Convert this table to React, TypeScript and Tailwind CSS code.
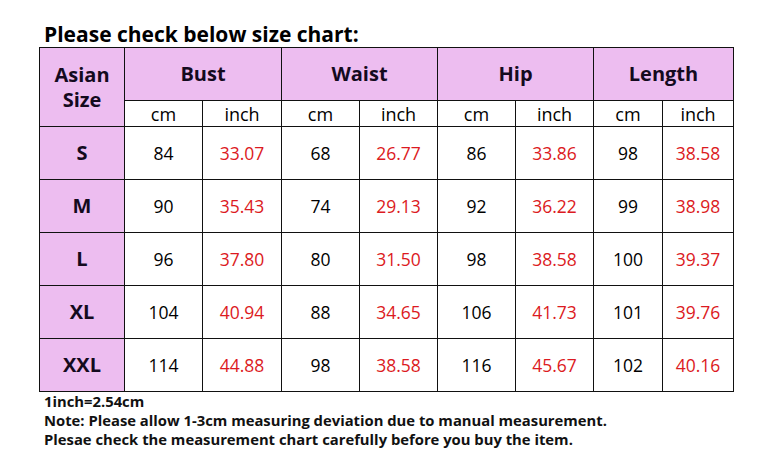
import React from "react";

type Row = { size: string; values: [string, string][] };

const rows: Row[] = [
  { size: "S", values: [["84", "33.07"], ["68", "26.77"], ["86", "33.86"], ["98", "38.58"]] },
  { size: "M", values: [["90", "35.43"], ["74", "29.13"], ["92", "36.22"], ["99", "38.98"]] },
  { size: "L", values: [["96", "37.80"], ["80", "31.50"], ["98", "38.58"], ["100", "39.37"]] },
  { size: "XL", values: [["104", "40.94"], ["88", "34.65"], ["106", "41.73"], ["101", "39.76"]] },
  { size: "XXL", values: [["114", "44.88"], ["98", "38.58"], ["116", "45.67"], ["102", "40.16"]] },
];

const groups = ["Bust", "Waist", "Hip", "Length"];

const cell = "border border-[#111] text-center p-0";

const App: React.FC = () => {
  return (
    <div className="w-[763px] h-[463px] bg-white pl-[39px] pt-[21px] font-['Open_Sans',sans-serif] text-black">
      <h1 className="pl-[5px] text-[21px] leading-[26px] font-bold">Please check below size chart:</h1>

      <table className="table-fixed border-collapse w-[694px]">
        <colgroup>
          <col className="w-[85px]" />
          <col className="w-[78px]" />
          <col className="w-[79px]" />
          <col className="w-[78px]" />
          <col className="w-[78px]" />
          <col className="w-[78px]" />
          <col className="w-[78px]" />
          <col className="w-[69px]" />
          <col className="w-[71px]" />
        </colgroup>
        <thead>
          <tr className="h-[53px]">
            <th
              rowSpan={2}
              className={`${cell} bg-[#edbdf0] text-[20px] leading-[25px] font-bold text-[#140a1e]`}
            >
              Asian
              <br />
              Size
            </th>
            {groups.map((g) => (
              <th
                key={g}
                colSpan={2}
                className={`${cell} bg-[#edbdf0] text-[20px] font-bold text-[#140a1e]`}
              >
                {g}
              </th>
            ))}
          </tr>
          <tr className="h-[26px]">
            {groups.map((g) => (
              <React.Fragment key={g}>
                <td className={`${cell} text-[18px] leading-[22px]`}>cm</td>
                <td className={`${cell} text-[18px] leading-[22px]`}>inch</td>
              </React.Fragment>
            ))}
          </tr>
        </thead>
        <tbody>
          {rows.map((row) => (
            <tr key={row.size} className="h-[53px]">
              <td className={`${cell} bg-[#edbdf0] text-[20px] font-bold text-[#140a1e]`}>{row.size}</td>
              {row.values.map(([cm, inch], i) => (
                <React.Fragment key={i}>
                  <td className={`${cell} text-[17.5px]`}>{cm}</td>
                  <td className={`${cell} text-[17.5px] text-[#dc1a22]`}>{inch}</td>
                </React.Fragment>
              ))}
            </tr>
          ))}
        </tbody>
      </table>

      <div className="pl-[5px] text-[14.8px] leading-[19px] font-bold text-[#111]">
        <p>1inch=2.54cm</p>
        <p>Note: Please allow 1-3cm measuring deviation due to manual measurement.</p>
        <p>Plesae check the measurement chart carefully before you buy the item.</p>
      </div>
    </div>
  );
};

export default App;
